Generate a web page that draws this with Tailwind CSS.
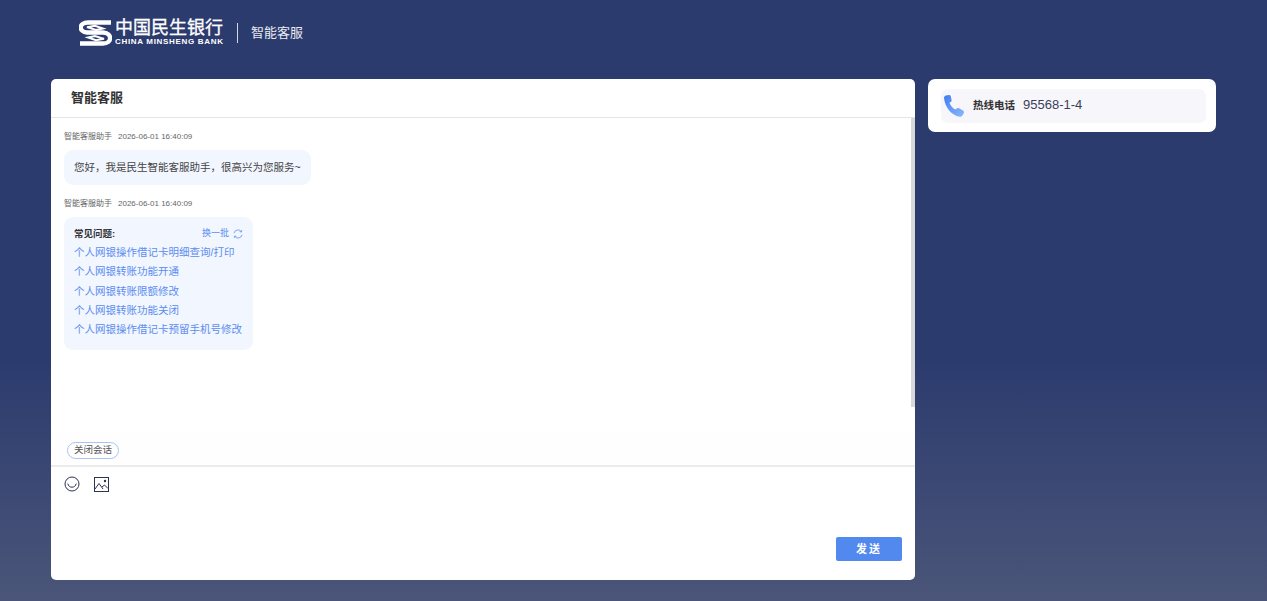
<!DOCTYPE html>
<html lang="zh-CN">
<head>
  <meta charset="UTF-8">
  <meta name="viewport" content="width=device-width, initial-scale=1.0">
  <title>智能客服</title>
  <script src="https://cdn.jsdelivr.net/npm/@tailwindcss/browser@4"></script>
</head>
<body class="h-[601px] w-[1267px] overflow-hidden bg-gradient-to-b from-[#2c3b6e] from-60% to-[#4b5579] font-['Liberation_Sans','Noto_Sans_CJK_SC',sans-serif] text-[#333]">
  <!-- 顶部 logo -->
  <header class="flex h-[79px] items-start pl-[79px] pt-[19px] text-white">
    <svg class="h-[28px] w-[33px]" viewBox="0 0 33 28" fill="none" stroke="#fff">
      <path stroke-width="4.4" stroke-linejoin="round" d="M32 3.5 H9 C-0.5 3.5 -0.5 13 8 13.5 H24 C33.5 14 33.5 24.5 24 24.5 H1"/>
      <path stroke-width="1.9" d="M8 8.2 L16 6.8 L24 9.5 L17 11 Z M25 19.8 L17 21.2 L9 18.5 L16 17 Z"/>
    </svg>
    <div class="ml-[3px] flex w-[108px] flex-col">
      <span class="text-[18px] leading-[18px] whitespace-nowrap [-webkit-text-stroke:0.3px_white]">中国民生银行</span>
      <span class="text-[8px] leading-[9px] font-bold tracking-[0.68px] whitespace-nowrap">CHINA MINSHENG BANK</span>
    </div>
    <div class="mt-[4px] ml-[14px] h-[20px] w-px bg-white/80"></div>
    <span class="mt-[5px] ml-[13px] text-[13px] leading-[18px] text-white/90">智能客服</span>
  </header>

  <main class="flex items-start gap-[13px] pl-[51px]">
    <!-- 会话窗口 -->
    <section class="flex h-[501px] w-[864px] flex-col rounded-[5px] bg-white">
      <div class="flex h-[39px] shrink-0 items-center border-b border-[#e4e4e4] pl-[20px] text-[13px] font-bold">智能客服</div>

      <div class="relative h-[314px] shrink-0 pt-[14px] pl-[13px]">
        <div class="absolute top-0 right-0 h-[289px] w-[4px] bg-[#d9d9d9]"></div>

        <p class="flex gap-[6px] text-[8px] leading-[10px] text-[#666]"><span>智能客服助手</span><span>2026-06-01 16:40:09</span></p>
        <div class="mt-[8px] flex h-[35px] w-[247px] items-center rounded-[9px] bg-[#f2f6ff] pl-[10px] text-[10.5px] whitespace-nowrap text-[#444]">您好，我是民生智能客服助手，很高兴为您服务~</div>

        <p class="mt-[14px] flex gap-[6px] text-[8px] leading-[10px] text-[#666]"><span>智能客服助手</span><span>2026-06-01 16:40:09</span></p>
        <div class="mt-[8px] h-[133px] w-[189px] rounded-[9px] bg-[#f2f6ff] px-[10px] pt-[7px] text-[10.5px] leading-[19.2px] whitespace-nowrap text-[#5b8def]">
          <div class="flex items-center justify-between">
            <span class="text-[9.5px] font-bold text-[#333]">常见问题:</span>
            <span class="flex items-center gap-[4px] text-[9px]">换一批
              <svg class="h-[10px] w-[10px]" viewBox="0 0 12 12" fill="none" stroke="#6f9df2" stroke-width="1.1">
                <path d="M1.2 5 A4.9 4.9 0 0 1 10 3.2 M10.8 7 A4.9 4.9 0 0 1 2 8.8"/>
                <path d="M10.6 1.4 L10 3.6 L7.9 3.2 M1.4 10.6 L2 8.4 L4.1 8.8"/>
              </svg>
            </span>
          </div>
          <a class="block">个人网银操作借记卡明细查询/打印</a>
          <a class="block">个人网银转账功能开通</a>
          <a class="block">个人网银转账限额修改</a>
          <a class="block">个人网银转账功能关闭</a>
          <a class="block">个人网银操作借记卡预留手机号修改</a>
        </div>
      </div>

      <div class="h-[35px] shrink-0 border-b-2 border-[#ececec] bg-[#fefefe] pt-[10px] pl-[16px]">
        <span class="flex h-[17px] w-[52px] items-center justify-center rounded-full border border-[#a9c4f5] text-[9.5px] text-[#555]">关闭会话</span>
      </div>

      <div class="flex flex-1 flex-col px-[13px] pt-[9px] pb-[19px]">
        <div class="flex items-center gap-[14px]">
          <svg class="h-[16px] w-[16px]" viewBox="0 0 16 16" fill="none" stroke="#2b3350" stroke-width="1">
            <circle cx="8" cy="8" r="7"/>
            <path d="M3.8 7.6 C4.6 12.4 11.4 12.4 12.2 7.6"/>
          </svg>
          <svg class="h-[15px] w-[15px]" viewBox="0 0 15 15" fill="none" stroke="#2b3350" stroke-width="1">
            <rect x="0.5" y="0.5" width="14" height="14"/>
            <path d="M1 12 L5 6.5 L9 12 M8 10 L10.5 8 L14 11.5"/>
            <circle cx="11" cy="4" r="1.2" fill="#2b3350" stroke="none"/>
          </svg>
        </div>
        <button class="mt-auto flex h-[24px] w-[66px] items-center justify-center self-end rounded-[2px] bg-[#5289ee] text-[11px] font-bold tracking-[2px] text-white">发送</button>
      </div>
    </section>

    <!-- 热线 -->
    <aside class="h-[53px] w-[288px] rounded-[7px] bg-white pt-[10px] pl-[13px]">
      <div class="flex h-[34px] w-[265px] items-center rounded-[7px] bg-[#f6f6fb] pl-[2px]">
        <svg class="h-[22px] w-[22px]" viewBox="0 0 22 22">
          <defs>
            <linearGradient id="phoneFill" x1="0" y1="0" x2="1" y2="1">
              <stop offset="0" stop-color="#3f7df0"/>
              <stop offset="1" stop-color="#8fb8fa"/>
            </linearGradient>
          </defs>
          <path fill="url(#phoneFill)" d="M3 0.5 L6 0 C7 0 7.6 0.6 7.8 1.4 L8.6 5 C8.8 6 8.3 6.8 7.5 7.2 L6.4 7.8 C7.4 10.6 9.8 13.4 12.6 14.6 L13.6 13.6 C14.3 13 15.2 12.9 16 13.3 L20 15.6 C21 16.2 21.3 17.2 20.8 18.2 L19.4 20.6 C18.8 21.6 17.8 22 16.6 21.8 C8.6 20.4 2 12.4 1 3 C0.9 1.8 1.8 0.8 3 0.5 Z"/>
        </svg>
        <span class="ml-[8px] text-[10.5px] font-bold text-[#333]">热线电话</span>
        <span class="ml-[8px] -translate-y-px text-[13px] text-[#3a3f58]">95568-1-4</span>
      </div>
    </aside>
  </main>
</body>
</html>
